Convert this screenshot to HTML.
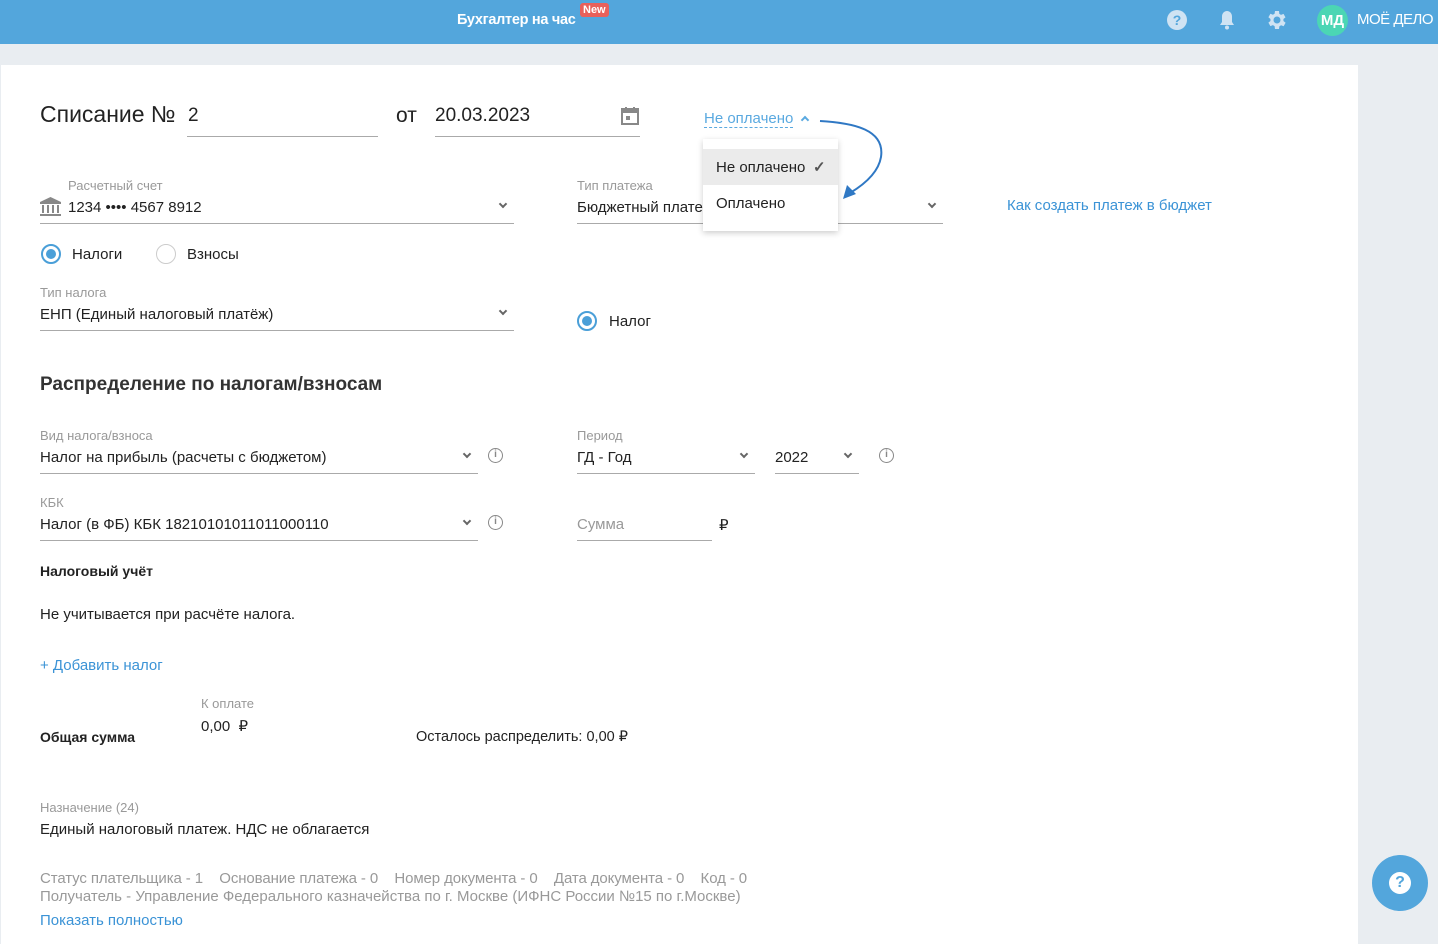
<!DOCTYPE html>
<html><head><meta charset="utf-8"><style>
*{margin:0;padding:0;box-sizing:border-box}
body{width:1438px;height:944px;overflow:hidden;background:#e9edf1;font-family:"Liberation Sans",sans-serif;color:#222;position:relative;font-size:15px}
.hdr{position:absolute;left:0;top:0;width:1438px;height:44px;background:#53a6dc}
.a{position:absolute;white-space:nowrap}
.card{position:absolute;left:1px;top:65px;width:1357px;height:879px;background:#fff}
.lbl{font-size:13px;color:#999}
.line{position:absolute;height:1px;background:#aaa}
.chev{position:absolute;width:6px;height:6px;border-right:2px solid #666;border-bottom:2px solid #666;transform:rotate(45deg)}
.info{position:absolute;width:15px;height:15px;border:1.5px solid #888;border-radius:50%;font-size:10px;color:#888;text-align:center;line-height:12px;font-weight:bold}
.radio{position:absolute;width:20px;height:20px;border-radius:50%;border:1.5px solid #ccc}
.radio.on{border:2px solid #4a9fd8}
.radio.on:after{content:"";position:absolute;left:3px;top:3px;width:10px;height:10px;border-radius:50%;background:#4a9fd8}
.blue{color:#3b93d6}
.gray{color:#999}
</style></head><body>
<div class="hdr">
 <div class="a" style="left:457px;top:12px;color:#fff;font-size:14.5px;font-weight:bold;letter-spacing:-0.3px">Бухгалтер на час</div>
 <div class="a" style="left:580px;top:3px;background:#e9605a;color:#fff;font-size:11px;padding:1px 3px;border-radius:3px;font-weight:bold">New</div>
 <div class="a" style="left:1167px;top:10px;width:20px;height:20px;border-radius:50%;background:#cfe3f3;color:#53a6dc;font-weight:bold;font-size:14px;text-align:center;line-height:20px">?</div>
 <svg class="a" style="left:1217px;top:9px" width="20" height="22" viewBox="0 0 20 22"><path d="M10 2c-3 0-5 2.5-5 5.5V13l-2 3h14l-2-3V7.5C15 4.5 13 2 10 2z" fill="#cfe3f3"/><circle cx="10" cy="18.5" r="2" fill="#cfe3f3"/></svg>
 <svg class="a" style="left:1265px;top:8px" width="24" height="24" viewBox="0 0 24 24"><path fill="#cfe3f3" d="M19.4 13a7.5 7.5 0 000-2l2.1-1.6-2-3.5-2.5 1a7 7 0 00-1.7-1L15 3h-4l-.4 2.7a7 7 0 00-1.7 1l-2.5-1-2 3.5L6.5 11a7.5 7.5 0 000 2l-2.1 1.6 2 3.5 2.5-1a7 7 0 001.7 1L11 21h4l.4-2.7a7 7 0 001.7-1l2.5 1 2-3.5zM13 15.5a3.5 3.5 0 110-7 3.5 3.5 0 010 7z" transform="translate(-1 0)"/></svg>
 <div class="a" style="left:1317px;top:5px;width:31px;height:31px;border-radius:50%;background:#4bd6b4;color:#fff;font-weight:bold;font-size:15px;text-align:center;line-height:31px">МД</div>
 <div class="a" style="left:1357px;top:11px;color:#fff;font-size:15px;letter-spacing:-0.5px">МОЁ ДЕЛО</div>
</div>
<div class="card"></div>
<div class="a" style="left:40px;top:101px;font-size:23px">Списание №</div>
<div class="a" style="left:188px;top:105px;font-size:19px">2</div>
<div class="line" style="left:187px;top:136px;width:191px"></div>
<div class="a" style="left:396px;top:104px;font-size:21px">от</div>
<div class="a" style="left:435px;top:105px;font-size:19px">20.03.2023</div>
<div class="line" style="left:435px;top:136px;width:205px"></div>
<svg class="a" style="left:620px;top:106px" width="20" height="20" viewBox="0 0 20 20"><rect x="2" y="3" width="16" height="15" fill="none" stroke="#888" stroke-width="2"/><rect x="2" y="3" width="16" height="4" fill="#888"/><rect x="5" y="1" width="2" height="4" fill="#888"/><rect x="13" y="1" width="2" height="4" fill="#888"/><rect x="6" y="10" width="4" height="4" fill="#888"/></svg>
<div class="a blue" style="left:704px;top:110px;font-size:15px;color:#5aa9e0;border-bottom:1px dashed #5aa9e0;line-height:17px">Не оплачено</div>
<div class="chev" style="left:802px;top:117px;transform:rotate(225deg);border-color:#5aa9e0"></div>
<svg class="a" style="left:815px;top:115px" width="75" height="90" viewBox="0 0 75 90"><path d="M5 6C40 8 70 15 66 42 63 60 45 72 35 78" fill="none" stroke="#2f78c4" stroke-width="2"/><path d="M28 84l4-14 9 9z" fill="#2f78c4"/></svg>

<div class="a lbl" style="left:68px;top:178px">Расчетный счет</div>
<svg class="a" style="left:40px;top:197px" width="21" height="19" viewBox="0 0 21 19"><path d="M10.5 0L0 5v2h21V5z" fill="#888"/><rect x="2" y="8" width="2" height="8" fill="#888"/><rect x="7" y="8" width="2" height="8" fill="#888"/><rect x="12" y="8" width="2" height="8" fill="#888"/><rect x="17" y="8" width="2" height="8" fill="#888"/><rect x="0" y="17" width="21" height="2" fill="#888"/></svg>
<div class="a" style="left:68px;top:199px">1234 •••• 4567 8912</div>
<div class="line" style="left:40px;top:223px;width:474px"></div>
<div class="chev" style="left:500px;top:201px"></div>

<div class="a lbl" style="left:577px;top:178px">Тип платежа</div>
<div class="a" style="left:577px;top:199px">Бюджетный плате</div>
<div class="line" style="left:577px;top:223px;width:366px"></div>
<div class="chev" style="left:929px;top:201px"></div>
<div class="a blue" style="left:1007px;top:197px;color:#3b93d6">Как создать платеж в бюджет</div>

<div class="a" style="left:703px;top:139px;width:135px;height:92px;background:#fff;box-shadow:0 2px 6px rgba(0,0,0,.2)">
 <div style="position:absolute;left:0;top:10px;width:135px;height:36px;background:#ebebeb"></div>
 <div class="a" style="left:13px;top:20px">Не оплачено</div>
 <div class="a" style="left:110px;top:19px;color:#555;font-weight:bold">✓</div>
 <div class="a" style="left:13px;top:56px">Оплачено</div>
</div>

<div class="radio on" style="left:41px;top:244px"></div>
<div class="a" style="left:72px;top:246px">Налоги</div>
<div class="radio" style="left:156px;top:244px"></div>
<div class="a" style="left:187px;top:246px">Взносы</div>

<div class="a lbl" style="left:40px;top:285px">Тип налога</div>
<div class="a" style="left:40px;top:306px">ЕНП (Единый налоговый платёж)</div>
<div class="line" style="left:40px;top:330px;width:474px"></div>
<div class="chev" style="left:500px;top:308px"></div>
<div class="radio on" style="left:577px;top:311px"></div>
<div class="a" style="left:609px;top:313px">Налог</div>

<div class="a" style="left:40px;top:374px;font-size:19px;font-weight:bold;color:#333">Распределение по налогам/взносам</div>

<div class="a lbl" style="left:40px;top:428px">Вид налога/взноса</div>
<div class="a" style="left:40px;top:449px">Налог на прибыль (расчеты с бюджетом)</div>
<div class="line" style="left:40px;top:473px;width:438px"></div>
<div class="chev" style="left:464px;top:451px"></div>
<div class="info" style="left:488px;top:448px">i</div>
<div class="a lbl" style="left:577px;top:428px">Период</div>
<div class="a" style="left:577px;top:449px">ГД - Год</div>
<div class="line" style="left:577px;top:473px;width:178px"></div>
<div class="chev" style="left:741px;top:451px"></div>
<div class="a" style="left:775px;top:449px">2022</div>
<div class="line" style="left:775px;top:473px;width:84px"></div>
<div class="chev" style="left:845px;top:451px"></div>
<div class="info" style="left:879px;top:448px">i</div>

<div class="a lbl" style="left:40px;top:495px">КБК</div>
<div class="a" style="left:40px;top:516px">Налог (в ФБ) КБК 18210101011011000110</div>
<div class="line" style="left:40px;top:540px;width:438px"></div>
<div class="chev" style="left:464px;top:518px"></div>
<div class="info" style="left:488px;top:515px">i</div>
<div class="a gray" style="left:577px;top:516px">Сумма</div>
<div class="line" style="left:577px;top:540px;width:135px"></div>
<div class="a" style="left:719px;top:516px">₽</div>

<div class="a" style="left:40px;top:563px;font-weight:bold;font-size:14px">Налоговый учёт</div>
<div class="a" style="left:40px;top:606px">Не учитывается при расчёте налога.</div>
<div class="a blue" style="left:40px;top:657px">+ Добавить налог</div>

<div class="a lbl" style="left:201px;top:696px">К оплате</div>
<div class="a" style="left:201px;top:717px">0,00 &nbsp;₽</div>
<div class="a" style="left:40px;top:729px;font-weight:bold;font-size:14px">Общая сумма</div>
<div class="a" style="left:416px;top:729px;font-size:14.5px">Осталось распределить: 0,00 ₽</div>

<div class="a lbl" style="left:40px;top:800px">Назначение (24)</div>
<div class="a" style="left:40px;top:821px">Единый налоговый платеж. НДС не облагается</div>
<div class="a gray" style="left:40px;top:870px;letter-spacing:-0.1px">Статус плательщика - 1 &nbsp;&nbsp; Основание платежа - 0 &nbsp;&nbsp; Номер документа - 0 &nbsp;&nbsp; Дата документа - 0 &nbsp;&nbsp; Код - 0</div>
<div class="a gray" style="left:40px;top:888px">Получатель - Управление Федерального казначейства по г. Москве (ИФНС России №15 по г.Москве)</div>
<div class="a blue" style="left:40px;top:912px">Показать полностью</div>

<div class="a" style="left:1372px;top:855px;width:56px;height:56px;border-radius:50%;background:#53a6dc"></div>
<div class="a" style="left:1389px;top:872px;width:22px;height:22px;border-radius:50%;background:#fff;color:#53a6dc;font-weight:bold;font-size:16px;text-align:center;line-height:22px">?</div>
</body></html>
